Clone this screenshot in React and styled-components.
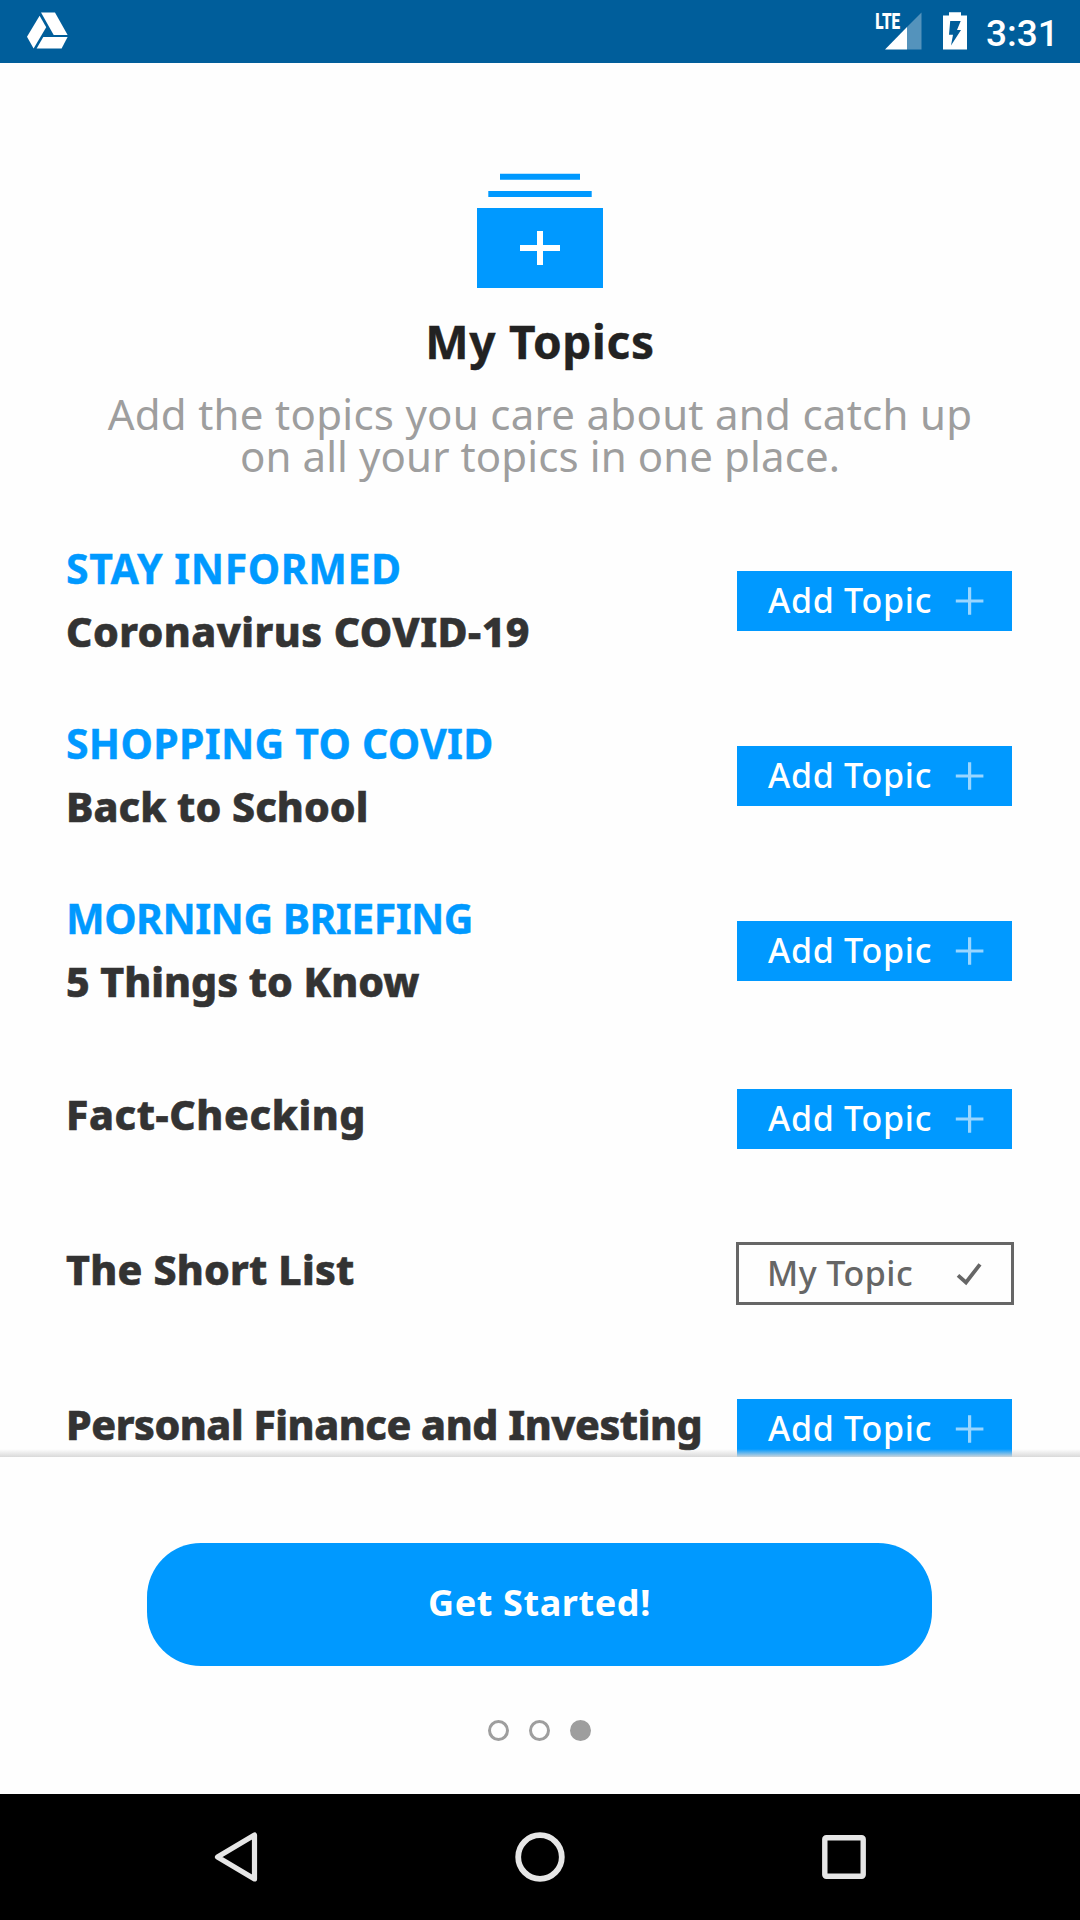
import React from "react";
import styled, { createGlobalStyle } from "styled-components";

const GlobalStyle = createGlobalStyle`
  * { box-sizing: border-box; }
  body {
    margin: 0;
    background: #fefefe;
    font-family: "Noto Sans", "Open Sans", sans-serif;
  }
  button { font-family: inherit; }
`;

const BLUE = "#0099ff";

const Screen = styled.div`
  width: 1080px;
  height: 1920px;
  display: flex;
  flex-direction: column;
  overflow: hidden;
  background: #fefefe;
`;

const StatusBar = styled.header`
  flex: none;
  height: 63px;
  display: flex;
  align-items: center;
  justify-content: space-between;
  padding: 0 23px 0 24px;
  background: #005e9b;
`;

const StatusGroup = styled.div`
  display: flex;
  align-items: center;
  height: 63px;
`;

const Clock = styled.span`
  width: 71px;
  margin-left: 19px;
  padding-top: 4px;
  font: 500 37px/59px Roboto, sans-serif;
  white-space: nowrap;
  color: #fff;
`;

const Content = styled.main`
  position: relative;
  flex: none;
  height: 1394px;
  overflow: hidden;
  display: flex;
  flex-direction: column;
`;

const BottomShade = styled.div`
  position: absolute;
  left: 0;
  right: 0;
  bottom: 0;
  height: 8px;
  background: linear-gradient(rgba(240, 240, 240, 0), rgba(215, 215, 215, 0.95));
`;

const Intro = styled.section`
  flex: none;
  display: flex;
  flex-direction: column;
  align-items: center;
  padding-top: 110px;
`;

const Title = styled.h1`
  margin: 26px 0 0;
  font-size: 46px;
  line-height: 54px;
  font-weight: 700;
  letter-spacing: 0.7px;
  color: #222;
  -webkit-text-stroke: 0.4px #222;
`;

const Subtitle = styled.p`
  margin: 25px 0 0;
  font-size: 42px;
  line-height: 42px;
  text-align: center;
  color: #9e9e9e;
`;

const SubtitleLine = styled.span`
  display: block;
  letter-spacing: ${(p) => p.$tracking}px;
`;

const TopicList = styled.ul`
  flex: none;
  list-style: none;
  margin: 39px 0 0;
  padding: 0;
`;

const TopicRow = styled.li`
  display: flex;
  align-items: center;
  justify-content: space-between;
  height: ${(p) => (p.$tall ? 175 : 155)}px;
  padding: ${(p) => (p.$tall ? "0 68px 5px 66px" : "1px 68px 0 66px")};
`;

const TopicText = styled.div`
  display: flex;
  flex-direction: column;
  margin-bottom: ${(p) => (p.$tall ? 3 : 9)}px;
  font-size: 41px;
  line-height: 63px;
  white-space: nowrap;
`;

const Kicker = styled.span`
  font-weight: 700;
  letter-spacing: ${(p) => p.$tracking}px;
  color: ${BLUE};
  -webkit-text-stroke: 0.4px ${BLUE};
`;

const TopicName = styled.span`
  font-weight: 800;
  letter-spacing: ${(p) => p.$tracking}px;
  color: #333;
  -webkit-text-stroke: 0.6px #333;
`;

const TopicButton = styled.button`
  flex: none;
  display: flex;
  align-items: center;
  justify-content: space-between;
  width: ${(p) => (p.$added ? 278 : 275)}px;
  height: ${(p) => (p.$added ? 63 : 60)}px;
  margin: ${(p) => (p.$added ? "-1px -2px 0 0" : "0")};
  padding: ${(p) => (p.$added ? "0 26px 0 28px" : "0 27px 0 31px")};
  border: ${(p) => (p.$added ? "3px solid #666" : "0")};
  background: ${(p) => (p.$added ? "#fefefe" : BLUE)};
  color: ${(p) => (p.$added ? "#666" : "#fff")};
`;

const ButtonLabel = styled.span`
  padding-bottom: ${(p) => (p.$added ? 1 : 3)}px;
  font-size: 34px;
  line-height: 40px;
  font-weight: 500;
  letter-spacing: ${(p) => (p.$added ? 0.45 : 0.7)}px;
  white-space: nowrap;
`;

const Footer = styled.footer`
  flex: none;
  height: 337px;
  display: flex;
  flex-direction: column;
  align-items: center;
  padding-top: 85.5px;
`;

const StartButton = styled.button`
  flex: none;
  width: 785px;
  height: 123px;
  margin-right: 1px;
  padding: 0 0 3px;
  border: 0;
  border-radius: 54px;
  background: ${BLUE};
  color: #fff;
  font-size: 36px;
  font-weight: 700;
  letter-spacing: 0.6px;
`;

const Pager = styled.div`
  display: flex;
  gap: 20px;
  margin: 54px 1.5px 0 0;
`;

const Dot = styled.span`
  width: 21px;
  height: 21px;
  border: 3px solid #9e9e9e;
  border-radius: 50%;
  background: ${(p) => (p.$active ? "#9e9e9e" : "transparent")};
`;

const NavBar = styled.nav`
  flex: none;
  height: 126px;
  display: flex;
  align-items: center;
  justify-content: center;
  gap: 244px;
  background: #000;
`;

const DriveIcon = () => (
  <svg width="48" height="63" viewBox="24 0 48 63" fill="#fff">
    <path d="M41 12.5H55L67.6 35H53.7Z" />
    <path d="M39.6 15.7L46.2 27.3L33.6 48.6L27 36.8Z" />
    <path d="M43.3 37H67.6L61.6 48.6H36.6Z" />
  </svg>
);

const SignalIcon = () => (
  <svg width="50" height="63" viewBox="874 0 50 63">
    <path d="M907 27V49.5H885Z" fill="#fff" />
    <path d="M907 27L921.5 12.5V49.5H907Z" fill="#fff" fillOpacity="0.33" />
    <text
      x="875.2"
      y="29.2"
      fontFamily="Roboto, sans-serif"
      fontWeight="900"
      fontSize="22"
      textLength="25"
      lengthAdjust="spacingAndGlyphs"
      fill="#fff"
    >
      LTE
    </text>
  </svg>
);

const BatteryIcon = () => (
  <svg width="43" height="63" viewBox="924 0 43 63">
    <path
      d="M949 12.3H961V15.5H967V49.6H943V15.5H949Z M950.2 21L949 34.7H953L951 45.5L961 30H957L960.7 21Z"
      fill="#fff"
      fillRule="evenodd"
    />
  </svg>
);

const StackIcon = () => (
  <svg width="126" height="115" viewBox="477 173 126 115">
    <path d="M500 173.7H580V179.7H500Z M488.3 191H591.7V197H488.3Z M477 208H603V288H477Z" fill={BLUE} />
    <path d="M520 245H537V231H543V245H560V251H543V265H537V251H520Z" fill="#fff" />
  </svg>
);

const PlusIcon = () => (
  <svg width="30" height="30" viewBox="0 0 30 30">
    <path d="M14.6 1.2V28.8M0.8 15H28.4" stroke="#fff" strokeOpacity="0.6" strokeWidth="3.2" />
  </svg>
);

const CheckIcon = () => (
  <svg width="30" height="30" viewBox="0 0 30 30" fill="none">
    <path d="M3 16.3L11 23.5L25 5.3" stroke="#666" strokeWidth="3.8" />
  </svg>
);

const BackIcon = () => (
  <svg width="60" height="60" viewBox="0 0 60 60" fill="none">
    <path d="M48.5 8V52L11.5 30Z" stroke="#e6e6e6" strokeWidth="5.2" strokeLinejoin="round" />
  </svg>
);

const HomeIcon = () => (
  <svg width="60" height="60" viewBox="0 0 60 60" fill="none">
    <circle cx="30" cy="30" r="21.8" stroke="#e6e6e6" strokeWidth="5.8" />
  </svg>
);

const RecentsIcon = () => (
  <svg width="60" height="60" viewBox="0 0 60 60" fill="none">
    <rect x="10.8" y="10.8" width="38.4" height="38.4" rx="1.5" stroke="#e6e6e6" strokeWidth="5.4" />
  </svg>
);

const topics = [
  { kicker: "STAY INFORMED", kickerTracking: 0.55, name: "Coronavirus COVID-19", tracking: 0.45 },
  { kicker: "SHOPPING TO COVID", kickerTracking: 0.27, name: "Back to School", tracking: 0.05 },
  { kicker: "MORNING BRIEFING", kickerTracking: -0.53, name: "5 Things to Know", tracking: 0 },
  { name: "Fact-Checking", tracking: 0.6 },
  { name: "The Short List", tracking: 0.22, added: true },
  { name: "Personal Finance and Investing", tracking: -0.44 },
];

const Topic = ({ kicker, kickerTracking, name, tracking, added }) => (
  <TopicRow $tall={Boolean(kicker)}>
    <TopicText $tall={Boolean(kicker)}>
      {kicker && <Kicker $tracking={kickerTracking}>{kicker}</Kicker>}
      <TopicName $tracking={tracking}>{name}</TopicName>
    </TopicText>
    <TopicButton $added={added}>
      <ButtonLabel $added={added}>{added ? "My Topic" : "Add Topic"}</ButtonLabel>
      {added ? <CheckIcon /> : <PlusIcon />}
    </TopicButton>
  </TopicRow>
);

export default function App() {
  return (
    <Screen>
      <GlobalStyle />
      <StatusBar>
        <DriveIcon />
        <StatusGroup>
          <SignalIcon />
          <BatteryIcon />
          <Clock>3:31</Clock>
        </StatusGroup>
      </StatusBar>
      <Content>
        <Intro>
          <StackIcon />
          <Title>My Topics</Title>
          <Subtitle>
            <SubtitleLine $tracking={0.28}>Add the topics you care about and catch up</SubtitleLine>
            <SubtitleLine $tracking={0.1}>on all your topics in one place.</SubtitleLine>
          </Subtitle>
        </Intro>
        <TopicList>
          {topics.map((topic) => (
            <Topic key={topic.name} {...topic} />
          ))}
        </TopicList>
        <BottomShade />
      </Content>
      <Footer>
        <StartButton>Get Started!</StartButton>
        <Pager>
          <Dot />
          <Dot />
          <Dot $active />
        </Pager>
      </Footer>
      <NavBar>
        <BackIcon />
        <HomeIcon />
        <RecentsIcon />
      </NavBar>
    </Screen>
  );
}
